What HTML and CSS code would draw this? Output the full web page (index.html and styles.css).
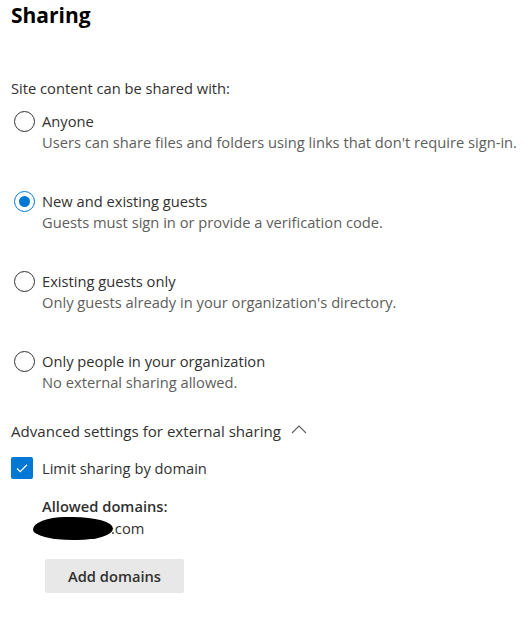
FILE: index.html
```html
<!DOCTYPE html>
<html lang="en">
<head>
<meta charset="utf-8">
<title>Sharing</title>
<link rel="stylesheet" href="styles.css">
</head>
<body>
<main class="panel">
  <h1 class="title">Sharing</h1>
  <p class="intro">Site content can be shared with:</p>

  <div class="options">
    <label class="option">
      <span class="radio"></span>
      <span class="option-text">
        <span class="option-label">Anyone</span>
        <span class="option-desc">Users can share files and folders using links that don't require sign-in.</span>
      </span>
    </label>
    <label class="option">
      <span class="radio checked"></span>
      <span class="option-text">
        <span class="option-label">New and existing guests</span>
        <span class="option-desc">Guests must sign in or provide a verification code.</span>
      </span>
    </label>
    <label class="option">
      <span class="radio"></span>
      <span class="option-text">
        <span class="option-label">Existing guests only</span>
        <span class="option-desc">Only guests already in your organization's directory.</span>
      </span>
    </label>
    <label class="option">
      <span class="radio"></span>
      <span class="option-text">
        <span class="option-label">Only people in your organization</span>
        <span class="option-desc">No external sharing allowed.</span>
      </span>
    </label>
  </div>

  <div class="advanced">
    <span>Advanced settings for external sharing</span>
    <svg class="chevron" width="16" height="10" viewBox="0 0 16 10" aria-hidden="true">
      <path d="M1 9 L8 2 L15 9" fill="none" stroke="#605e5c" stroke-width="1.1"/>
    </svg>
  </div>

  <label class="check-row">
    <span class="checkbox">
      <svg width="14" height="12" viewBox="0 0 14 12" aria-hidden="true">
        <path d="M2 6.5 L5.3 9.6 L12 2.8" fill="none" stroke="#ffffff" stroke-width="1.3"/>
      </svg>
    </span>
    <span class="check-label">Limit sharing by domain</span>
  </label>

  <div class="domains">
    <div class="domains-title">Allowed domains:</div>
    <div class="domain"><span class="redact"></span>.com</div>
    <button class="btn" type="button">Add domains</button>
  </div>
</main>
</body>
</html>
```

FILE: styles.css
```css
* { box-sizing: border-box; }

body {
  margin: 0;
  background: #ffffff;
  color: #323130;
  font-family: "Open Sans", "Noto Sans", "Liberation Sans", sans-serif;
  font-size: 14.7px;
}

.panel {
  padding: 0 0 0 11px;
}

.title {
  margin: 0;
  padding-top: 1px;
  font-size: 21px;
  line-height: 28px;
  font-weight: 700;
  color: #000000;
}

.intro {
  margin: 49px 0 0;
  line-height: 21px;
}

.options {
  display: flex;
  flex-direction: column;
  gap: 38px;
  margin-top: 12px;
}

.option {
  display: flex;
  align-items: flex-start;
  gap: 7px;
}

.radio {
  flex: none;
  width: 21px;
  height: 21px;
  margin: 0 0 0 3px;
  border: 1px solid #323130;
  border-radius: 50%;
  display: flex;
  align-items: center;
  justify-content: center;
}

.radio.checked {
  border-color: #0078d4;
}

.radio.checked::after {
  content: "";
  width: 11px;
  height: 11px;
  border-radius: 50%;
  background: #0078d4;
}

.option-text {
  display: flex;
  flex-direction: column;
  line-height: 21px;
}

.option-desc {
  color: #605e5c;
}

.advanced {
  display: flex;
  align-items: center;
  gap: 10px;
  margin-top: 28px;
  line-height: 21px;
  font-size: 15.1px;
}

.chevron {
  margin-top: -6px;
}

.check-row {
  display: flex;
  align-items: center;
  gap: 9px;
  margin-top: 15px;
  height: 22px;
}

.checkbox {
  width: 22px;
  height: 22px;
  border-radius: 2px;
  background: #0078d4;
  display: flex;
  align-items: center;
  justify-content: center;
}

.domains {
  padding-left: 31px;
  margin-top: 17px;
  line-height: 21px;
}

.domains-title {
  font-weight: 600;
}

.domain {
  display: flex;
  align-items: center;
}

.redact {
  width: 80px;
  height: 23px;
  margin-left: -9px;
  margin-right: -2px;
  background: #000000;
  border-radius: 40% 50% 45% 50% / 55% 50% 50% 45%;
}

.btn {
  display: block;
  margin: 19px 0 0 3px;
  width: 139px;
  height: 34px;
  border: none;
  border-radius: 2px;
  background: #e8e8e8;
  color: #323130;
  font-family: inherit;
  font-size: 14.7px;
  font-weight: 600;
  padding: 0;
}
```
